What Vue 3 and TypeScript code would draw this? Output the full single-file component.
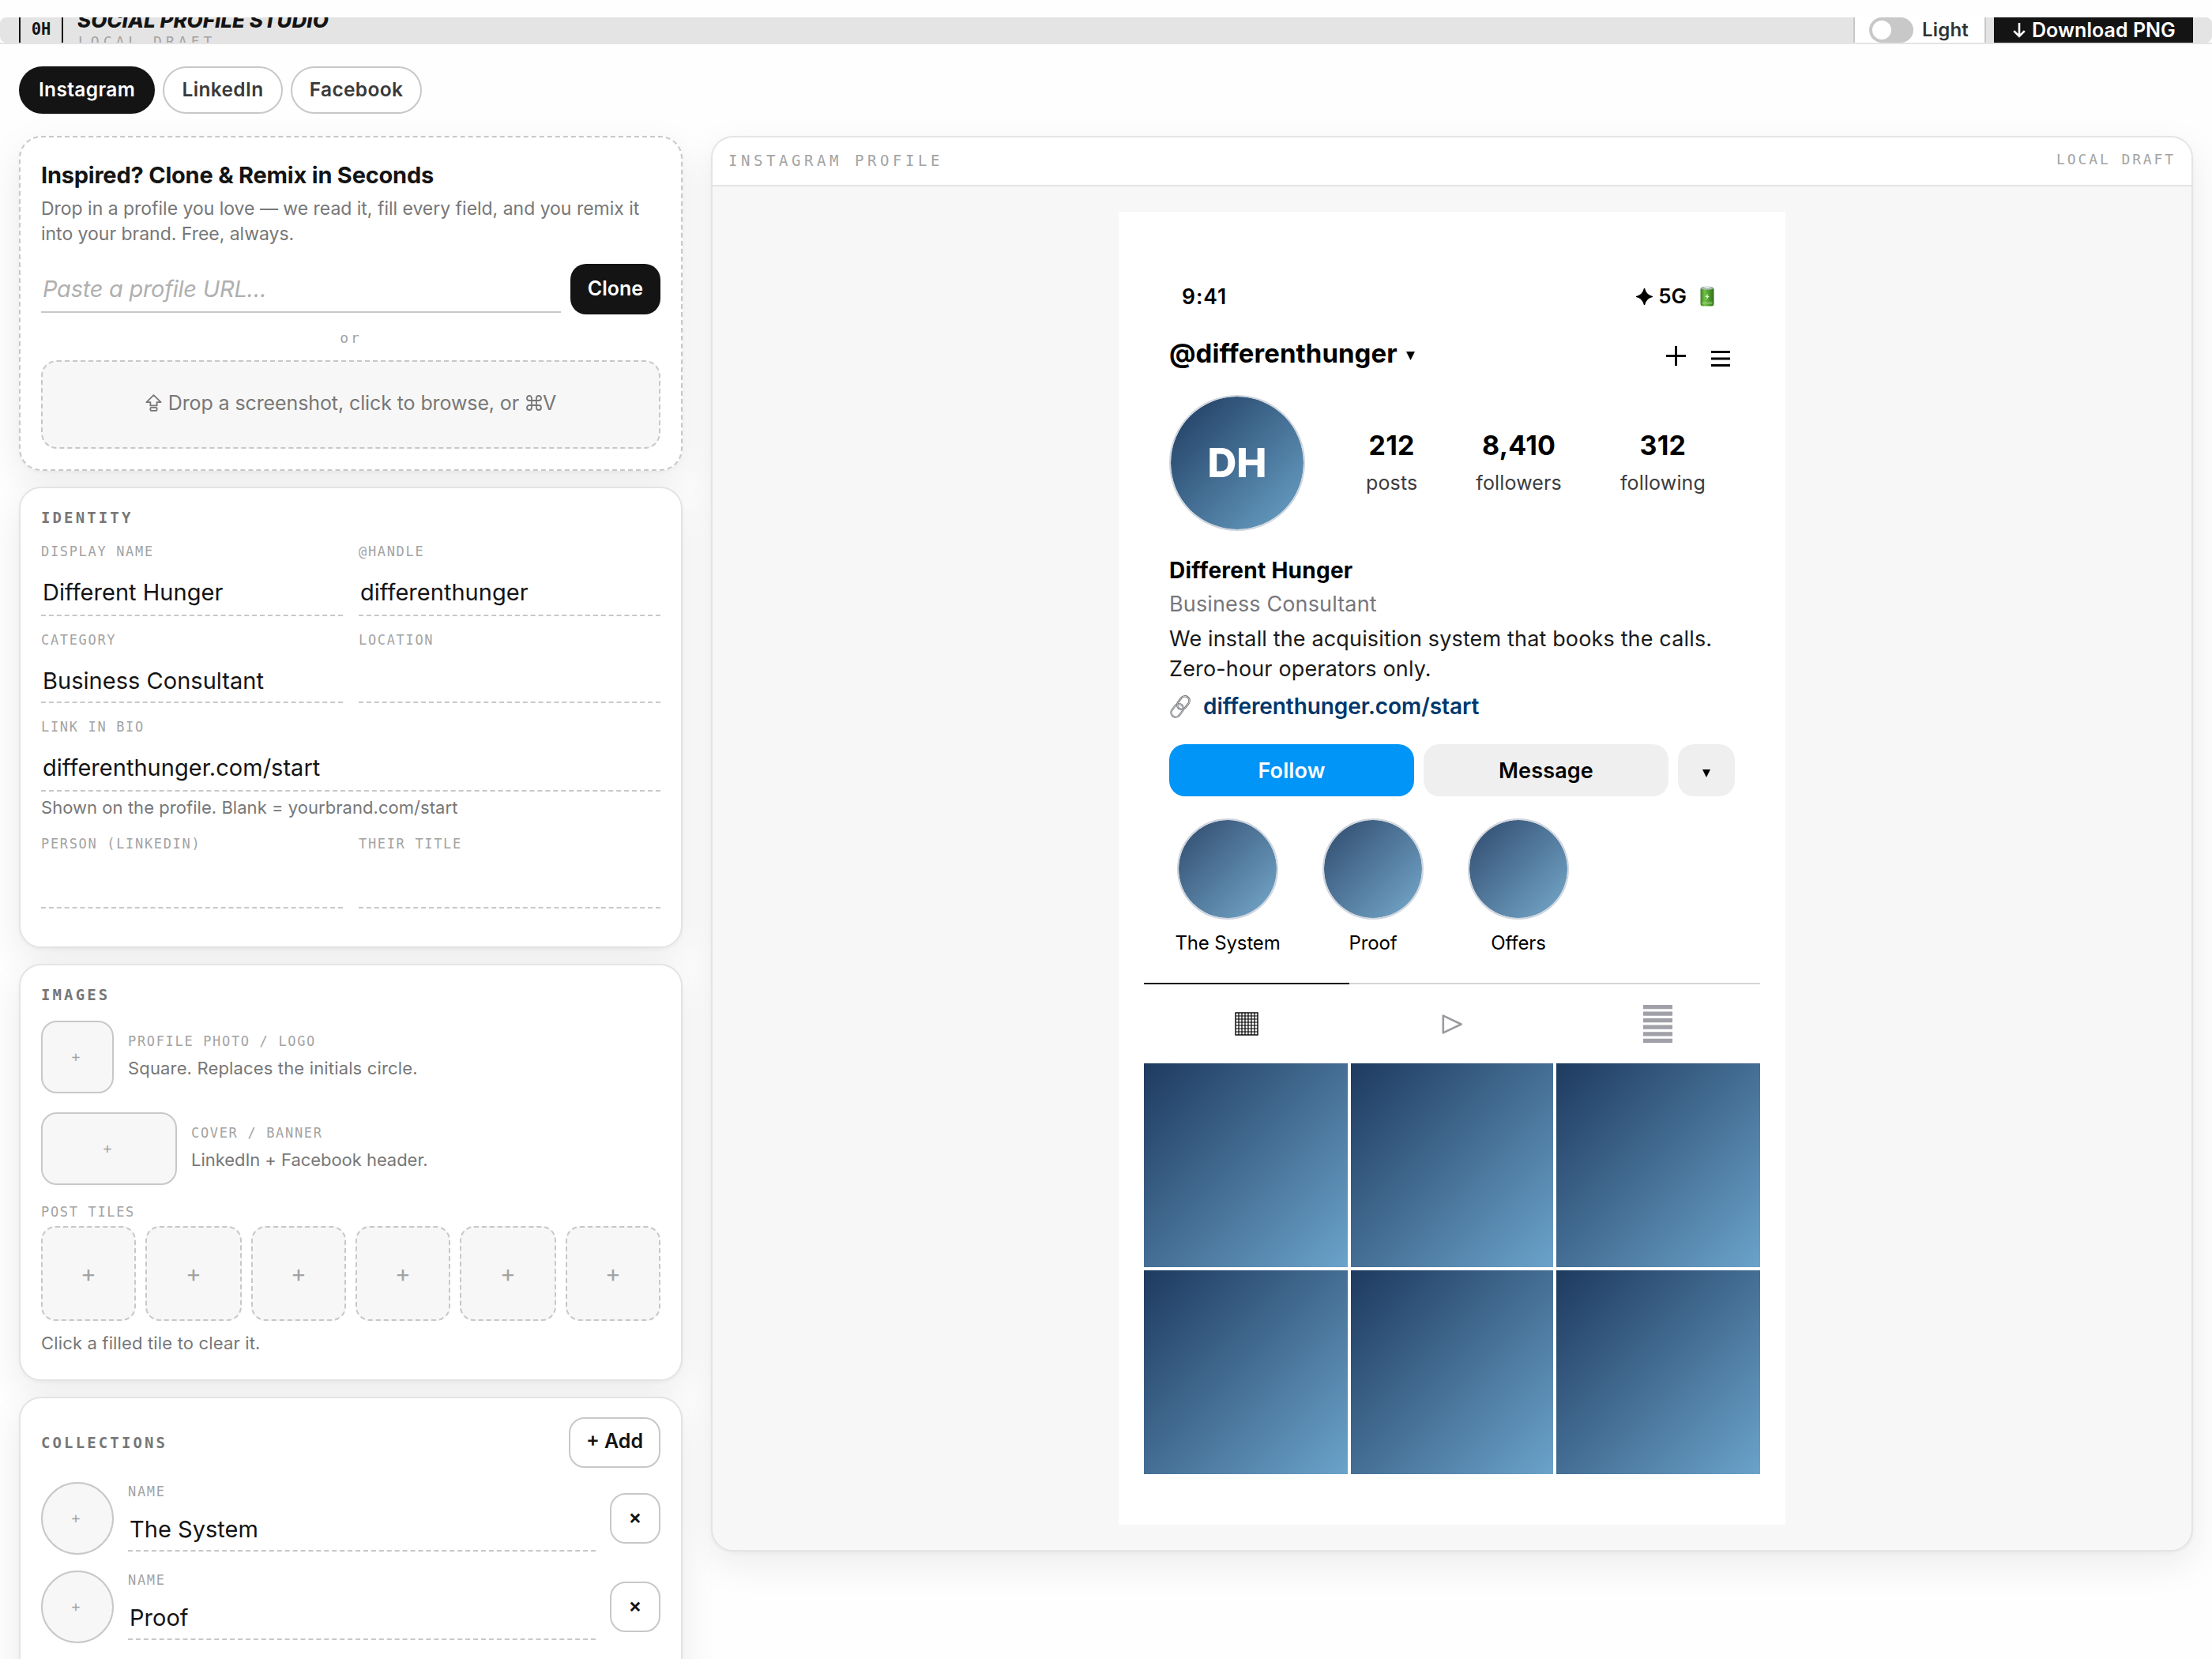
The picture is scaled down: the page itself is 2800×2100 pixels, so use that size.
<script setup lang="ts">
import { ref } from 'vue'

interface Field {
  label: string
  value: string
  hint?: string
  wide?: boolean
  short?: boolean
}

const networks = [
  { name: 'Instagram', width: 172 },
  { name: 'LinkedIn', width: 152 },
  { name: 'Facebook', width: 166 }
]
const active = ref('Instagram')

const fields: Field[] = [
  { label: 'DISPLAY NAME', value: 'Different Hunger' },
  { label: '@HANDLE', value: 'differenthunger' },
  { label: 'CATEGORY', value: 'Business Consultant', short: true },
  { label: 'LOCATION', value: '', short: true },
  {
    label: 'LINK IN BIO',
    value: 'differenthunger.com/start',
    hint: 'Shown on the profile. Blank = yourbrand.com/start',
    wide: true
  },
  { label: 'PERSON (LINKEDIN)', value: '' },
  { label: 'THEIR TITLE', value: '' }
]

const collections = ref(['The System', 'Proof', 'Offers'])

const stats = [
  { value: '212', label: 'posts' },
  { value: '8,410', label: 'followers' },
  { value: '312', label: 'following' }
]
</script>

<template>
  <div class="page">
    <header class="topbar">
      <div class="bar">
        <div class="badge">0H</div>
        <div class="brand">
          <div class="brand-title">SOCIAL PROFILE STUDIO</div>
          <div class="brand-sub">LOCAL DRAFT</div>
        </div>
        <div class="mode">
          <span class="switch"><span class="knob"></span></span>
          <span class="mode-label">Light</span>
        </div>
        <button class="download">
          <svg width="16" height="20" viewBox="0 0 16 20" fill="none" stroke="currentColor" stroke-width="2.6">
            <path d="M8 1V18M1.2 11.2L8 18L14.8 11.2" />
          </svg>
          <span>Download PNG</span>
        </button>
      </div>
    </header>

    <nav class="tabs">
      <button
        v-for="n in networks"
        :key="n.name"
        class="tab"
        :class="{ on: n.name === active }"
        :style="{ width: n.width + 'px' }"
        @click="active = n.name"
      >
        {{ n.name }}
      </button>
    </nav>

    <main class="columns">
      <div class="left">
        <section class="card clone">
          <h2 class="clone-title">Inspired? Clone &amp; Remix in Seconds</h2>
          <p class="clone-text">
            Drop in a profile you love — we read it, fill every field, and you remix it<br />into your brand. Free,
            always.
          </p>
          <div class="clone-row">
            <div class="url">Paste a profile URL…</div>
            <button class="clone-btn">Clone</button>
          </div>
          <div class="or">or</div>
          <div class="drop">
            <svg width="21" height="22" viewBox="0 0 21 22" fill="none" stroke="currentColor" stroke-width="1.8" stroke-linejoin="round">
              <path d="M10.5 1.2L19.6 10.2H14.6V14.4H6.4V10.2H1.4Z" />
              <rect x="6.4" y="16.8" width="8.2" height="4" rx="1" />
            </svg>
            <span>Drop a screenshot, click to browse, or</span>
            <svg class="cmd" width="20" height="20" viewBox="0 0 20 20" fill="none" stroke="currentColor" stroke-width="1.8">
              <path d="M7 7V4A3 3 0 1 0 4 7H16A3 3 0 1 0 13 4V16A3 3 0 1 0 16 13H4A3 3 0 1 0 7 16Z" />
            </svg>
            <span>V</span>
          </div>
        </section>

        <section class="card identity">
          <h3 class="section">IDENTITY</h3>
          <div class="fields">
            <div v-for="f in fields" :key="f.label" class="field" :class="{ wide: f.wide, short: f.short }">
              <div class="label">{{ f.label }}</div>
              <div class="input">{{ f.value }}</div>
              <div v-if="f.hint" class="hint">{{ f.hint }}</div>
            </div>
          </div>
        </section>

        <section class="card images">
          <h3 class="section">IMAGES</h3>
          <div class="upload">
            <div class="slot">+</div>
            <div class="upload-text">
              <div class="label">PROFILE PHOTO / LOGO</div>
              <div class="note">Square. Replaces the initials circle.</div>
            </div>
          </div>
          <div class="upload second">
            <div class="slot banner">+</div>
            <div class="upload-text">
              <div class="label">COVER / BANNER</div>
              <div class="note">LinkedIn + Facebook header.</div>
            </div>
          </div>
          <div class="label">POST TILES</div>
          <div class="tiles">
            <div v-for="i in 6" :key="i" class="tile">+</div>
          </div>
          <div class="note">Click a filled tile to clear it.</div>
        </section>

        <section class="card">
          <div class="section-row">
            <h3 class="section">COLLECTIONS</h3>
            <button class="ghost add">+ Add</button>
          </div>
          <div v-for="c in collections" :key="c" class="collection">
            <div class="slot round">+</div>
            <div class="collection-field">
              <div class="label">NAME</div>
              <div class="input">{{ c }}</div>
            </div>
            <button class="ghost remove">×</button>
          </div>
        </section>
      </div>

      <section class="preview">
        <div class="preview-head">
          <span class="preview-title">INSTAGRAM PROFILE</span>
          <span class="preview-state">LOCAL DRAFT</span>
        </div>
        <div class="stage">
          <div class="phone">
            <div class="status">
              <span>9:41</span>
              <span class="status-right">
                <svg width="21" height="21" viewBox="0 0 21 21" fill="currentColor">
                  <path d="M10.5 0Q12.3 8.7 21 10.5Q12.3 12.3 10.5 21Q8.7 12.3 0 10.5Q8.7 8.7 10.5 0Z" stroke="currentColor" stroke-width="1.2" />
                </svg>
                <span class="signal">5G</span>
                <svg width="18" height="26" viewBox="0 0 18 26">
                  <defs>
                    <linearGradient id="cell" x1="0" x2="1" y1="0" y2="0">
                      <stop offset="0" stop-color="#3f7d22" />
                      <stop offset=".3" stop-color="#6fc244" />
                      <stop offset=".6" stop-color="#4fa02b" />
                      <stop offset="1" stop-color="#356e1c" />
                    </linearGradient>
                  </defs>
                  <rect x=".5" y="1.5" width="17" height="24" rx="3" fill="url(#cell)" />
                  <ellipse cx="9" cy="2.6" rx="8" ry="2.2" fill="#a9b8b4" />
                  <ellipse cx="9" cy="1.8" rx="3.6" ry="1.2" fill="#dfe6e4" />
                  <path d="M10.2 9.6L6.2 14H8.8L7.8 17.4L11.8 12.8H9.2Z" fill="#e9f7e2" />
                  <path d="M2.5 20.4H15.5M2.5 22.6H15.5" stroke="#a5d68a" stroke-width=".8" />
                </svg>
              </span>
            </div>

            <div class="handle-row">
              <span class="handle">@differenthunger</span>
              <svg class="caret" width="11" height="11" viewBox="0 0 11 11"><path d="M0 0H11L5.5 11Z" /></svg>
              <svg class="plus" width="25" height="25" viewBox="0 0 25 25" stroke="#000" stroke-width="2.8">
                <path d="M12.5 0V25M0 12.5H25" />
              </svg>
              <svg class="menu" width="24" height="20" viewBox="0 0 24 20" stroke="#000" stroke-width="3">
                <path d="M0 1.5H24M0 10H24M0 18.5H24" />
              </svg>
            </div>

            <div class="summary">
              <div class="avatar">DH</div>
              <div class="stats">
                <div v-for="s in stats" :key="s.label" class="stat">
                  <div class="stat-value">{{ s.value }}</div>
                  <div class="stat-label">{{ s.label }}</div>
                </div>
              </div>
            </div>

            <div class="name">Different Hunger</div>
            <div class="category">Business Consultant</div>
            <div class="bio">We install the acquisition system that books the calls.<br />Zero-hour operators only.</div>
            <div class="link">
              <svg width="28" height="29" viewBox="0 0 28 29" fill="none">
                <g transform="rotate(-52 14 14.5)">
                  <rect x="-1.2" y="8.8" width="18" height="11.4" rx="5.7" stroke="#77797d" stroke-width="2.4" />
                  <rect x="-1.2" y="8.8" width="18" height="11.4" rx="5.7" stroke="#d6d8db" stroke-width=".9" />
                  <rect x="11.2" y="8.8" width="18" height="11.4" rx="5.7" stroke="#66696d" stroke-width="2.4" />
                  <rect x="11.2" y="8.8" width="18" height="11.4" rx="5.7" stroke="#d6d8db" stroke-width=".9" />
                </g>
              </svg>
              <span>differenthunger.com/start</span>
            </div>

            <div class="actions">
              <div class="action follow">Follow</div>
              <div class="action">Message</div>
              <div class="action more">
                <svg width="10" height="10" viewBox="0 0 10 10"><path d="M0 0H10L5 10Z" /></svg>
              </div>
            </div>

            <div class="highlights">
              <div v-for="c in collections" :key="c" class="highlight">
                <div class="ring"></div>
                <div class="highlight-name">{{ c }}</div>
              </div>
            </div>

            <div class="views">
              <div class="view on">
                <svg width="30" height="30" viewBox="0 0 30 30" fill="none" stroke="#000">
                  <rect x="1" y="1" width="28" height="28" stroke-width="1.4" />
                  <path
                    d="M5 1V29M9 1V29M13 1V29M17 1V29M21 1V29M25 1V29M1 5H29M1 9H29M1 13H29M1 17H29M1 21H29M1 25H29"
                    stroke-width="1.2"
                  />
                </svg>
              </div>
              <div class="view">
                <svg width="26" height="25" viewBox="0 0 26 25" fill="none" stroke="#9a9aa0" stroke-width="2.6" stroke-linejoin="round">
                  <path d="M1.8 1.6V23.4L24.6 12.5Z" />
                </svg>
              </div>
              <div class="view">
                <svg width="37" height="48" viewBox="0 0 37 48" stroke="#a0a0a8" stroke-width="5.2">
                  <path d="M0 2.6H37M0 11.1H37M0 19.7H37M0 28.2H37M0 36.8H37M0 45.3H37" />
                </svg>
              </div>
            </div>

            <div class="posts">
              <div v-for="i in 6" :key="i" class="post"></div>
            </div>
          </div>
        </div>
      </section>
    </main>
  </div>
</template>

<style>
body {
  margin: 0;
  background: #fefefe;
}
</style>

<style scoped>
* {
  box-sizing: border-box;
}
.page {
  width: 2800px;
  height: 2100px;
  overflow: hidden;
  padding-top: 22px;
  background: #fefefe;
  color: #141414;
  font-family: Inter, 'Liberation Sans', sans-serif;
}
h2,
h3,
p {
  margin: 0;
}
button {
  font: inherit;
  color: inherit;
  padding: 0;
  border: 0;
  background: none;
}
svg {
  display: block;
  flex: none;
}

/* top bar */
.topbar {
  border-bottom: 2px solid #e4e4e4;
}
.bar {
  height: 32px;
  overflow: hidden;
  display: flex;
  align-items: center;
  padding: 0 24px;
  background: #e4e4e4;
  border-radius: 8px;
}
.badge {
  flex: none;
  width: 56px;
  height: 56px;
  border: 2px solid #141414;
  font: 700 20.5px/50px 'DejaVu Sans Mono', monospace;
  text-align: center;
}
.brand {
  flex: 1;
  margin: 0 0 4px 18px;
}
.brand-title {
  font-size: 26px;
  font-weight: 800;
  font-style: italic;
  line-height: 33px;
}
.brand-sub {
  font: 18px/21px 'DejaVu Sans Mono', monospace;
  letter-spacing: 0.278em;
  margin-left: 1px;
  color: #a3a3a3;
}
.mode {
  flex: none;
  width: 168px;
  height: 60px;
  display: flex;
  align-items: center;
  gap: 11px;
  padding-left: 18px;
  border: 2px solid #c8c8c8;
  background: #fff;
}
.switch {
  width: 56px;
  height: 32px;
  padding: 4px;
  border-radius: 16px;
  background: #c8c8c8;
}
.knob {
  display: block;
  width: 24px;
  height: 24px;
  border-radius: 50%;
  background: #fff;
}
.mode-label {
  padding-bottom: 1px;
  font-size: 24px;
  font-weight: 600;
  letter-spacing: 0.008em;
  color: #333;
}
.download {
  flex: none;
  width: 252px;
  height: 60px;
  margin-left: 10px;
  padding: 0 0 1px 24px;
  display: flex;
  align-items: center;
  gap: 8px;
  background: #141414;
  color: #fff;
  font-size: 25px;
  font-weight: 600;
  letter-spacing: 0.002em;
}

/* network tabs */
.tabs {
  display: flex;
  gap: 10px;
  padding: 28px 24px;
}
.tab {
  height: 60px;
  padding-bottom: 2px;
  border: 2px solid #c8c8c8;
  border-radius: 30px;
  background: #fff;
  color: #3a3a3a;
  font-size: 24.5px;
  font-weight: 600;
  letter-spacing: 0.014em;
}
.tab.on {
  border-color: #141414;
  background: #141414;
  color: #fff;
}

/* editor column */
.columns {
  display: flex;
  align-items: flex-start;
  gap: 36px;
  padding: 0 24px;
}
.left {
  flex: none;
  width: 840px;
  display: flex;
  flex-direction: column;
  gap: 20px;
}
.card {
  padding: 24px 26px 28px;
  border: 2px solid #e4e4e4;
  border-radius: 28px;
  background: #fff;
  box-shadow: 0 2px 4px rgba(20, 30, 28, 0.04), 0 16px 48px rgba(20, 30, 28, 0.08);
}
.card.clone {
  padding-bottom: 26px;
  border: 2px dashed #c8c8c8;
}
.clone-title {
  font-size: 29px;
  font-weight: 700;
  line-height: 48px;
  letter-spacing: -0.0075em;
}
.clone-text {
  margin-top: 2px;
  font-size: 23px;
  line-height: 32px;
  letter-spacing: -0.001em;
  color: #777;
  white-space: nowrap;
}
.clone-row {
  display: flex;
  align-items: center;
  gap: 12px;
  margin-top: 22px;
}
.url {
  flex: 1;
  height: 60px;
  padding: 1px 2px 0;
  border-bottom: 2px solid #c8c8c8;
  font-size: 29px;
  font-style: italic;
  line-height: 58px;
  letter-spacing: -0.009em;
  color: #b0b0b0;
}
.clone-btn {
  width: 114px;
  height: 64px;
  padding-bottom: 2px;
  border-radius: 20px;
  background: #141414;
  color: #fff;
  font-size: 25px;
  font-weight: 600;
}
.or {
  height: 58px;
  padding-top: 1px;
  text-align: center;
  font: 18px/58px 'DejaVu Sans Mono', monospace;
  letter-spacing: 0.16em;
  color: #a3a3a3;
}
.drop {
  height: 112px;
  display: flex;
  align-items: center;
  justify-content: center;
  padding-bottom: 5px;
  border: 2px dashed #c8c8c8;
  border-radius: 20px;
  background: #f7f7f7;
  color: #777;
  font-size: 25px;
  letter-spacing: -0.0042em;
}
.drop svg + span {
  margin-left: 8px;
}
.drop .cmd {
  margin-left: 9px;
}
.drop .cmd + span {
  margin-left: 1px;
}

.section {
  font: 700 19px/28px 'DejaVu Sans Mono', monospace;
  letter-spacing: 0.164em;
  color: #777;
  margin-top: -1px;
}
.label {
  font: 17px/20px 'DejaVu Sans Mono', monospace;
  letter-spacing: 0.098em;
  color: #a3a3a3;
}
.input {
  height: 72px;
  padding: 13px 2px 0;
  border-bottom: 2px dashed #c8c8c8;
  font-size: 29px;
  line-height: 58px;
  letter-spacing: 0.001em;
}
.hint,
.note {
  font-size: 22px;
  line-height: 30px;
  letter-spacing: 0.007em;
  color: #777;
}
.hint {
  margin-top: 5px;
  letter-spacing: 0.002em;
}
.fields {
  display: grid;
  grid-template-columns: 1fr 1fr;
  gap: 20px;
  margin-top: 19px;
  padding-bottom: 20px;
}
.field.short .input {
  height: 70px;
}
.field.wide {
  grid-column: 1 / -1;
  padding-bottom: 1px;
}

.images .section {
  margin-bottom: 19px;
}
.upload {
  display: flex;
  align-items: center;
  gap: 18px;
}
.upload-text {
  padding-bottom: 2px;
}
.upload .note {
  margin-top: 9px;
}
.upload.second {
  margin: 24px 0;
}
.upload.second .note {
  letter-spacing: -0.002em;
}
.slot {
  flex: none;
  width: 92px;
  height: 92px;
  display: flex;
  align-items: center;
  justify-content: center;
  padding: 0 4px 1px 0;
  border: 2px solid #c8c8c8;
  border-radius: 20px;
  background: #f7f7f7;
  color: #a3a3a3;
  font: 18px/1 'DejaVu Sans Mono', monospace;
}
.slot.banner {
  width: 172px;
}
.slot.round {
  border-radius: 50%;
}
.tiles {
  display: grid;
  grid-template-columns: 120px 122px 120px 120px 122px 120px;
  gap: 12px;
  margin: 8px 0 13px;
}
.tile {
  height: 120px;
  display: flex;
  align-items: center;
  justify-content: center;
  padding-bottom: 1px;
  border: 2px dashed #c8c8c8;
  border-radius: 18px;
  background: #f7f7f7;
  color: #a3a3a3;
  font-size: 30px;
}
.images > .note {
  margin-bottom: 3px;
}

.section-row {
  display: flex;
  align-items: center;
  justify-content: space-between;
}
.ghost {
  height: 64px;
  padding-bottom: 4px;
  border: 2px solid #c8c8c8;
  border-radius: 20px;
  background: #fff;
  font-size: 25px;
  font-weight: 600;
}
.add {
  width: 116px;
}
.remove {
  width: 64px;
}
.collection {
  display: flex;
  align-items: center;
  gap: 18px;
  margin-top: 18px;
}
.collection + .collection {
  margin-top: 20px;
}
.collection-field {
  flex: 1;
  margin-bottom: 2px;
}
.collection-field .input {
  height: 66px;
  padding-top: 11px;
  line-height: 53px;
}

/* preview column */
.preview {
  flex: 1;
  overflow: hidden;
  border: 2px solid #e4e4e4;
  border-radius: 28px;
  background: #f7f7f7;
  box-shadow: 0 2px 4px rgba(20, 30, 28, 0.04), 0 16px 48px rgba(20, 30, 28, 0.08);
}
.preview-head {
  height: 62px;
  display: flex;
  align-items: center;
  justify-content: space-between;
  padding: 0 20px 2px;
  border-bottom: 2px solid #e4e4e4;
  background: #fff;
  color: #a3a3a3;
}
.preview-title {
  font: 19px/1 'DejaVu Sans Mono', monospace;
  letter-spacing: 0.24em;
}
.preview-state {
  padding-bottom: 2px;
  font: 18px/1 'DejaVu Sans Mono', monospace;
  letter-spacing: 0.16em;
}
.stage {
  display: flex;
  justify-content: center;
  padding: 32px;
}
.phone {
  width: 844px;
  padding: 89px 64px 64px;
  background: #fff;
  color: #000;
}
.status {
  display: flex;
  justify-content: space-between;
  align-items: center;
  padding: 0 26px 0 16px;
  font-size: 26.5px;
  font-weight: 600;
  line-height: 36px;
  letter-spacing: 0.035em;
}
.status-right {
  display: flex;
  align-items: center;
}
.signal {
  margin: 0 17px 0 7px;
  font-size: 26px;
  letter-spacing: 0;
}
.handle-row {
  display: flex;
  align-items: center;
  height: 44px;
  margin-top: 32px;
}
.handle {
  font-size: 33px;
  font-weight: 700;
  line-height: 44px;
  letter-spacing: 0.002em;
}
.caret {
  margin: 7px 0 0 11px;
}
.plus {
  margin: 6px 32px 0 auto;
}
.menu {
  margin: 13px 6px 0 0;
}
.summary {
  display: flex;
  gap: 40px;
  margin-top: 31px;
}
.avatar {
  flex: none;
  width: 172px;
  height: 172px;
  display: flex;
  align-items: center;
  justify-content: center;
  padding-bottom: 1px;
  border: 2px solid #cfd5de;
  border-radius: 50%;
  background: linear-gradient(135deg, #1e3a5f, #6ba3c8) padding-box;
  color: #fff;
  font-size: 51px;
  font-weight: 800;
}
.stats {
  flex: 1;
  display: flex;
  align-items: center;
  justify-content: space-around;
  padding-bottom: 2px;
}
.stat {
  text-align: center;
}
.stat-value {
  font-size: 34px;
  font-weight: 700;
  line-height: 44px;
  letter-spacing: 0.006em;
}
.stat-label {
  margin-top: 8px;
  font-size: 25px;
  line-height: 34px;
  letter-spacing: 0.006em;
  color: #3c3c40;
}
.name {
  margin-top: 30px;
  font-size: 28px;
  font-weight: 700;
  line-height: 40px;
  letter-spacing: 0.0095em;
}
.category {
  margin-top: 3px;
  font-size: 27px;
  line-height: 40px;
  letter-spacing: 0.005em;
  color: #77777c;
}
.bio {
  margin-top: 5px;
  font-size: 27px;
  line-height: 38px;
  letter-spacing: 0.0055em;
  color: #1a1a1a;
}
.link {
  display: flex;
  align-items: center;
  gap: 15px;
  margin-top: 9px;
  font-size: 28px;
  font-weight: 600;
  line-height: 38px;
  letter-spacing: -0.003em;
  color: #00376b;
}
.actions {
  display: flex;
  gap: 12px;
  margin-top: 29px;
}
.action {
  flex: 1;
  height: 66px;
  border-radius: 20px;
  background: #efefef;
  text-align: center;
  font-size: 27px;
  font-weight: 600;
  line-height: 68px;
  letter-spacing: 0.005em;
}
.action.follow {
  background: #0095f6;
  color: #fff;
}
.action.more {
  flex: none;
  width: 72px;
  display: flex;
  align-items: center;
  justify-content: center;
  padding-top: 7px;
}
.highlights {
  display: flex;
  gap: 36px;
  margin-top: 28px;
}
.highlight {
  width: 148px;
  display: flex;
  flex-direction: column;
  align-items: center;
}
.ring {
  width: 128px;
  height: 128px;
  border: 2px solid #cfd5de;
  border-radius: 50%;
  background: linear-gradient(135deg, #2f4a6d, #76aacc) padding-box;
}
.highlight-name {
  margin-top: 14px;
  font-size: 24px;
  line-height: 32px;
  letter-spacing: -0.006em;
}
.views {
  display: flex;
  height: 102px;
  margin: 34px -32px 0;
}
.view {
  flex: 1;
  display: flex;
  align-items: center;
  justify-content: center;
  border-top: 2px solid #d5d5d8;
}
.view.on {
  border-top-color: #000;
}
.posts {
  display: grid;
  grid-template-columns: 258px 256px 258px;
  grid-auto-rows: 258px;
  gap: 4px;
  margin: 0 -32px;
}
.post {
  background: linear-gradient(135deg, #1e3a5f 0%, #41698f 45%, #6ba3ca 100%);
}
</style>
